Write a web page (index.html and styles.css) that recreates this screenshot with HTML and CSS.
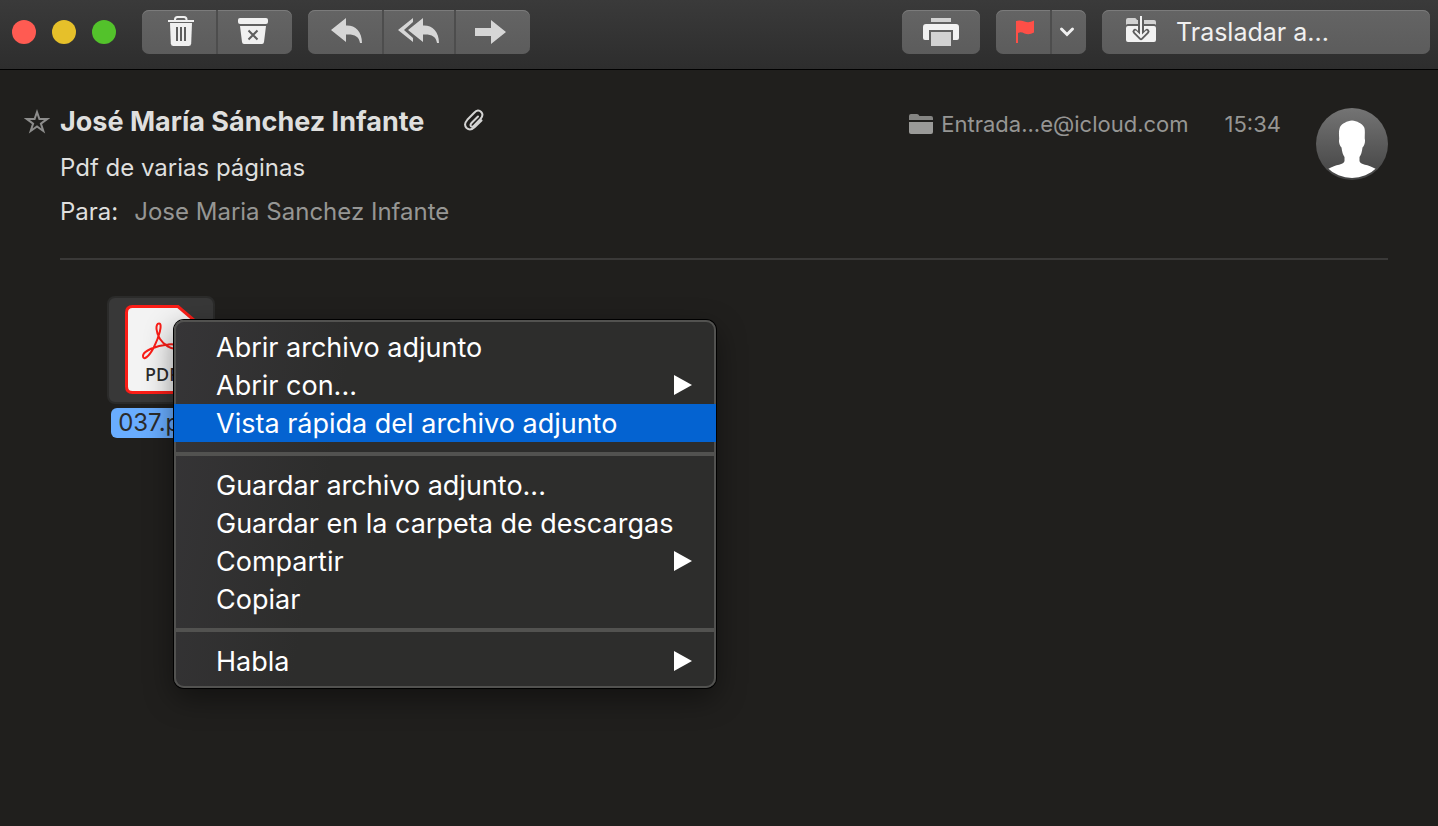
FILE: index.html
```html
<!DOCTYPE html>
<html lang="es">
<head>
<meta charset="utf-8">
<title>Pdf de varias páginas</title>
<link rel="stylesheet" href="styles.css">
</head>
<body>
<header class="toolbar">
  <div class="lights">
    <button class="light light-close" aria-label="Cerrar"></button>
    <button class="light light-min" aria-label="Minimizar"></button>
    <button class="light light-zoom" aria-label="Ampliar"></button>
  </div>
  <div class="group">
    <button class="tool tool-trash" aria-label="Eliminar">
      <svg width="28" height="32" viewBox="0 0 28 32"><path d="M8 4.500V3.500Q8 1 10.500 1H17Q19.500 1 19.500 3.500V4.500" fill="none" stroke="#f0f0f0" stroke-width="2"/><path d="M1 4H27V6H1Z" fill="#f0f0f0"/><path d="M3 7H25L24.200 27.500Q24 30 21.500 30H6.500Q4 30 3.800 27.500Z" fill="#f0f0f0"/><path d="M10 11V25M14 11V25M18 11V25" stroke="#5e5e5e" stroke-width="2"/></svg>
    </button>
    <button class="tool tool-archive" aria-label="Archivar">
      <svg width="30" height="28" viewBox="0 0 30 28"><rect width="30" height="6" rx="2" fill="#f0f0f0"/><path d="M2 8H28L26 24Q25.800 26 24 26H6Q4.200 26 4 24Z" fill="#f0f0f0"/><path d="M10.500 12.500 19.500 21.500M19.500 12.500 10.500 21.500" stroke="#5e5e5e" stroke-width="2"/></svg>
    </button>
  </div>
  <div class="group">
    <button class="tool tool-reply" aria-label="Responder">
      <svg width="32" height="28" viewBox="0 0 32 28"><path d="M0 12 15 0V7.500C24 7 31 13 31 25H29C28 18 23 16 15 16.500V24Z" fill="#d6d6d6"/></svg>
    </button>
    <button class="tool tool-reply-all" aria-label="Responder a todos">
      <svg width="42" height="28" viewBox="0 0 42 28"><path d="M10 12 25 0V7.500C34 7 41 13 41 25H39C38 18 33 16 25 16.500V24Z" fill="#d6d6d6"/><path d="M15 0V4L6 12 15 20V24L0 12Z" fill="#d6d6d6"/></svg>
    </button>
    <button class="tool tool-forward" aria-label="Reenviar">
      <svg width="32" height="26" viewBox="0 0 32 26"><path d="M0 9H16V1L31 13 16 25V17H0Z" fill="#d6d6d6"/></svg>
    </button>
  </div>
  <div class="spacer"></div>
  <div class="group">
    <button class="tool tool-print" aria-label="Imprimir">
      <svg width="36" height="30" viewBox="0 0 36 30"><path d="M8 1H28V5H8Z" fill="#d2d2d2"/><path d="M3 7H33Q36 7 36 10V21Q36 23 34 23H30V13H6V23H2Q0 23 0 21V10Q0 7 3 7Z" fill="#f2f2f2"/><path d="M8 15H28V29H8Z" fill="#d2d2d2"/></svg>
    </button>
  </div>
  <div class="group">
    <button class="tool tool-flag" aria-label="Marcar">
      <svg width="20" height="24" viewBox="0 0 20 24"><path d="M1 1Q5 0 9.500 1.500 14 3.200 19 .5V12.500Q14 15.500 9.500 13.500 6 11.500 3 13V23H1Z" fill="#fe4f47"/></svg>
    </button>
    <button class="tool tool-caret" aria-label="Colores de bandera">
      <svg width="16" height="12" viewBox="0 0 16 12"><path d="M2.500 3 8 8.500 13.500 3" fill="none" stroke="#f0f0f0" stroke-width="3" stroke-linecap="round" stroke-linejoin="miter"/></svg>
    </button>
  </div>
  <div class="group">
    <button class="tool tool-move">
      <svg width="30" height="28" viewBox="0 0 30 28"><path d="M0 9V4Q0 2 2 2H9Q10 2 11 4H12V8H2Q.5 8 0 9ZM18 4H28Q30 4 30 6V9Q29.500 8 28 8H18Z" fill="#d2d2d2"/><path d="M2 10H12V12H18V10H28Q30 10 30 12V24Q30 26 28 26H2Q0 26 0 24V12Q0 10 2 10Z" fill="#f2f2f2"/><path d="M15 3V21" stroke="#5e5e5e" stroke-width="6"/><path d="M9 15.500 15 21.500 21 15.500" fill="none" stroke="#5e5e5e" stroke-width="5" stroke-linecap="round" stroke-linejoin="round"/><path d="M15 0V21" stroke="#f2f2f2" stroke-width="2"/><path d="M9.500 15.500 15 21 20.500 15.500" fill="none" stroke="#f2f2f2" stroke-width="2" stroke-linecap="round"/></svg>
      <span>Trasladar a...</span>
    </button>
  </div>
</header>

<main class="message">
  <section class="head">
    <button class="star" aria-label="Destacar">
      <svg width="26" height="26" viewBox="0 0 26 26"><path d="M13 4 15.400 11.100H23L16.900 15.600 19.300 23 13 18.500 6.700 23 9.100 15.600 3 11.100H10.600Z" fill="none" stroke="#8d8d8c" stroke-width="2"/></svg>
    </button>
    <div class="info">
      <div class="sender-row">
        <h1 class="sender">José María Sánchez Infante</h1>
        <svg class="clip" width="20" height="24" viewBox="0 0 20 24"><path d="M14 7.500 7.500 14Q5.800 16 7 17.200 8.300 18.400 10.200 16.500L16.500 10Q20 6 17.200 3 14-.2 10.200 3.800L3.300 10.800Q-.8 15.500 2.600 19 6.200 22.400 10.800 18L17.500 11.500" transform="translate(0 1)" fill="none" stroke="#d4d4d3" stroke-width="2" stroke-linecap="round"/></svg>
      </div>
      <p class="subject">Pdf de varias páginas</p>
      <p class="to"><span>Para:</span><span class="muted">Jose Maria Sanchez Infante</span></p>
    </div>
    <div class="meta">
      <svg width="24" height="20" viewBox="0 0 24 20"><path d="M0 6V2Q0 0 2 0H8Q9.500 0 10.500 2H22Q24 2 24 4V6Z" fill="#858583"/><path d="M0 8H24V18Q24 20 22 20H2Q0 20 0 18Z" fill="#9a9a98"/></svg>
      <span class="mailbox">Entrada...e@icloud.com</span>
      <time>15:34</time>
    </div>
    <svg class="avatar" width="72" height="72" viewBox="0 0 72 72">
      <defs>
        <linearGradient id="disc" x2="0" y2="1"><stop stop-color="#747474"/><stop offset="1" stop-color="#434343"/></linearGradient>
        <clipPath id="inner"><circle cx="36" cy="35" r="35"/></clipPath>
      </defs>
      <circle cx="36" cy="36" r="36" fill="url(#disc)"/>
      <path clip-path="url(#inner)" d="M36 12.500C41 13 46 15.500 48 19 49.500 22 48.500 27 48.800 31 49.500 33 48.500 38 46.500 39.500 46 44 45 47 43.500 49V53C44 57 52 56 60 61V72H12V61C20 56 28 57 28.500 53V49C27 47 26 44 25.500 39.500 23.500 38 22.500 33 23.200 31 23 27 22.500 23 24 19 26 15.500 31 13 36 12.500Z" fill="#fff"/>
    </svg>
  </section>

  <section class="body">
    <div class="attachment">
      <div class="tile">
        <svg width="72" height="90" viewBox="0 0 72 90">
          <path d="M7.500 1.500H53L70 16V81.500Q70 87.500 64 87.500H7.500Q1.500 87.500 1.500 81.500V7.500Q1.500 1.500 7.500 1.500Z" fill="#f3f3f3" stroke="#fb1d17" stroke-width="3"/>
          <path d="M34 18.500C30 18.500 31 28 35 34 39 40 46 44.500 51 43.500 55 42 51 38.500 43 39.500 31 40.500 18 46 18 51 18 56 24 52 29 42 34 32 38 18.500 34 18.500Z" fill="none" stroke="#fb1d17" stroke-width="2"/>
          <text class="pdf" x="20" y="76">PDF</text>
        </svg>
      </div>
      <span class="filename">037.pdf</span>
      <div class="menu" role="menu">
        <button class="item" role="menuitem">Abrir archivo adjunto</button>
        <button class="item sub" role="menuitem">Abrir con...</button>
        <button class="item active" role="menuitem">Vista rápida del archivo adjunto</button>
        <hr class="sep">
        <button class="item" role="menuitem">Guardar archivo adjunto...</button>
        <button class="item" role="menuitem">Guardar en la carpeta de descargas</button>
        <button class="item sub" role="menuitem">Compartir</button>
        <button class="item" role="menuitem">Copiar</button>
        <hr class="sep">
        <button class="item sub" role="menuitem">Habla</button>
      </div>
    </div>
  </section>
</main>
</body>
</html>
```

FILE: styles.css
```css
* {
  box-sizing: border-box;
}

body {
  margin: 0;
  min-height: 100vh;
  background: #201f1d;
  color: #dfdfde;
  font-family: Inter, "Liberation Sans", sans-serif;
  font-size: 24px;
}

button {
  margin: 0;
  padding: 0;
  border: 0;
  background: none;
  color: inherit;
  font: inherit;
}

svg {
  display: block;
  flex: none;
}

.toolbar {
  display: flex;
  gap: 16px;
  height: 70px;
  padding: 10px 8px 0 12px;
  border-bottom: 1px solid #000;
  background: linear-gradient(#3a3a3a, #2d2d2d);
}

.lights {
  display: flex;
  align-items: center;
  gap: 16px;
  height: 44px;
  margin-right: 10px;
}

.light {
  width: 24px;
  height: 24px;
  border-radius: 50%;
}

.light-close {
  background: #ff5b52;
}

.light-min {
  background: #e6c02a;
}

.light-zoom {
  background: #53c22b;
}

.group {
  display: flex;
  height: 44px;
  overflow: hidden;
  border-radius: 7px;
  background: linear-gradient(#646464, #5c5c5c);
  box-shadow: inset 0 1px #7b7b7b;
}

.tool {
  display: flex;
  align-items: center;
  justify-content: center;
}

.tool + .tool {
  border-left: 2px solid #4d4d4d;
}

.tool-trash {
  width: 74px;
  padding-left: 4px;
}

.tool-archive {
  width: 76px;
  padding-right: 4px;
}

.tool-reply {
  width: 74px;
  padding-left: 4px;
}

.tool-reply-all {
  width: 72px;
}

.tool-forward {
  width: 76px;
  padding-right: 4px;
}

.tool-print {
  width: 78px;
}

.tool-flag {
  width: 54px;
  padding-left: 4px;
}

.tool-caret {
  width: 36px;
  padding-right: 4px;
}

.tool-move {
  justify-content: flex-start;
  gap: 20px;
  width: 328px;
  padding-left: 24px;
  color: #f0f0f0;
  font-size: 25px;
}

.tool-move svg {
  margin-bottom: 4px;
}

.spacer {
  flex: 1;
}

.message {
  padding: 38px 50px 0 24px;
}

.head {
  display: flex;
  align-items: flex-start;
  padding-bottom: 24px;
}

.star {
  margin-right: 10px;
}

.info {
  flex: 1;
}

.sender-row {
  display: flex;
  align-items: center;
  gap: 40px;
  height: 28px;
}

.sender {
  margin: 0;
  font-size: 27px;
  font-weight: 700;
  line-height: 28px;
}

.clip {
  margin-bottom: 4px;
}

.subject,
.to {
  margin: 0;
  line-height: 44px;
}

.subject {
  margin-top: 10px;
}

.to {
  display: flex;
  gap: 16px;
}

.muted,
.meta {
  color: #969694;
}

.meta {
  display: flex;
  align-items: center;
  height: 32px;
  font-size: 22px;
}

.mailbox {
  margin: 0 36px 0 8px;
}

.avatar {
  margin-left: 35px;
}

.body {
  margin-left: 36px;
  padding: 36px 47px;
  border-top: 2px solid #3a3938;
}

.attachment {
  position: relative;
  display: flex;
  flex-direction: column;
  align-items: center;
  gap: 4px;
  width: 108px;
}

.tile {
  display: flex;
  align-items: center;
  justify-content: center;
  width: 108px;
  height: 108px;
  border: 2px solid #2b2b2a;
  border-radius: 8px;
  background: #383838;
}

.pdf {
  fill: #2b2b2b;
  font-family: "Noto Sans", sans-serif;
  font-size: 18px;
  font-weight: 500;
}

.filename {
  padding: 0 7px;
  border-radius: 6px;
  background: #69adff;
  color: #2b2b2b;
  line-height: 30px;
}

.menu {
  position: absolute;
  top: 24px;
  left: 67px;
  width: 542px;
  padding: 8px 0;
  border-radius: 10px;
  background: linear-gradient(100deg, #363537, #2d2d2c 30%);
  box-shadow: inset 0 0 0 2px #525250, 0 0 0 1px #000, 0 10px 30px rgba(0, 0, 0, 0.45);
  color: #fff;
  font-size: 27px;
}

.item {
  display: flex;
  align-items: center;
  justify-content: space-between;
  width: 100%;
  height: 38px;
  padding: 0 24px 0 42px;
  text-align: left;
  white-space: nowrap;
}

.active {
  background: #0463d1;
}

.sub::after {
  content: "";
  border: solid transparent;
  border-width: 10px 0 10px 18px;
  border-left-color: #fff;
}

.sep {
  height: 4px;
  margin: 10px 0;
  border: 0;
  background: #525250;
}
```
